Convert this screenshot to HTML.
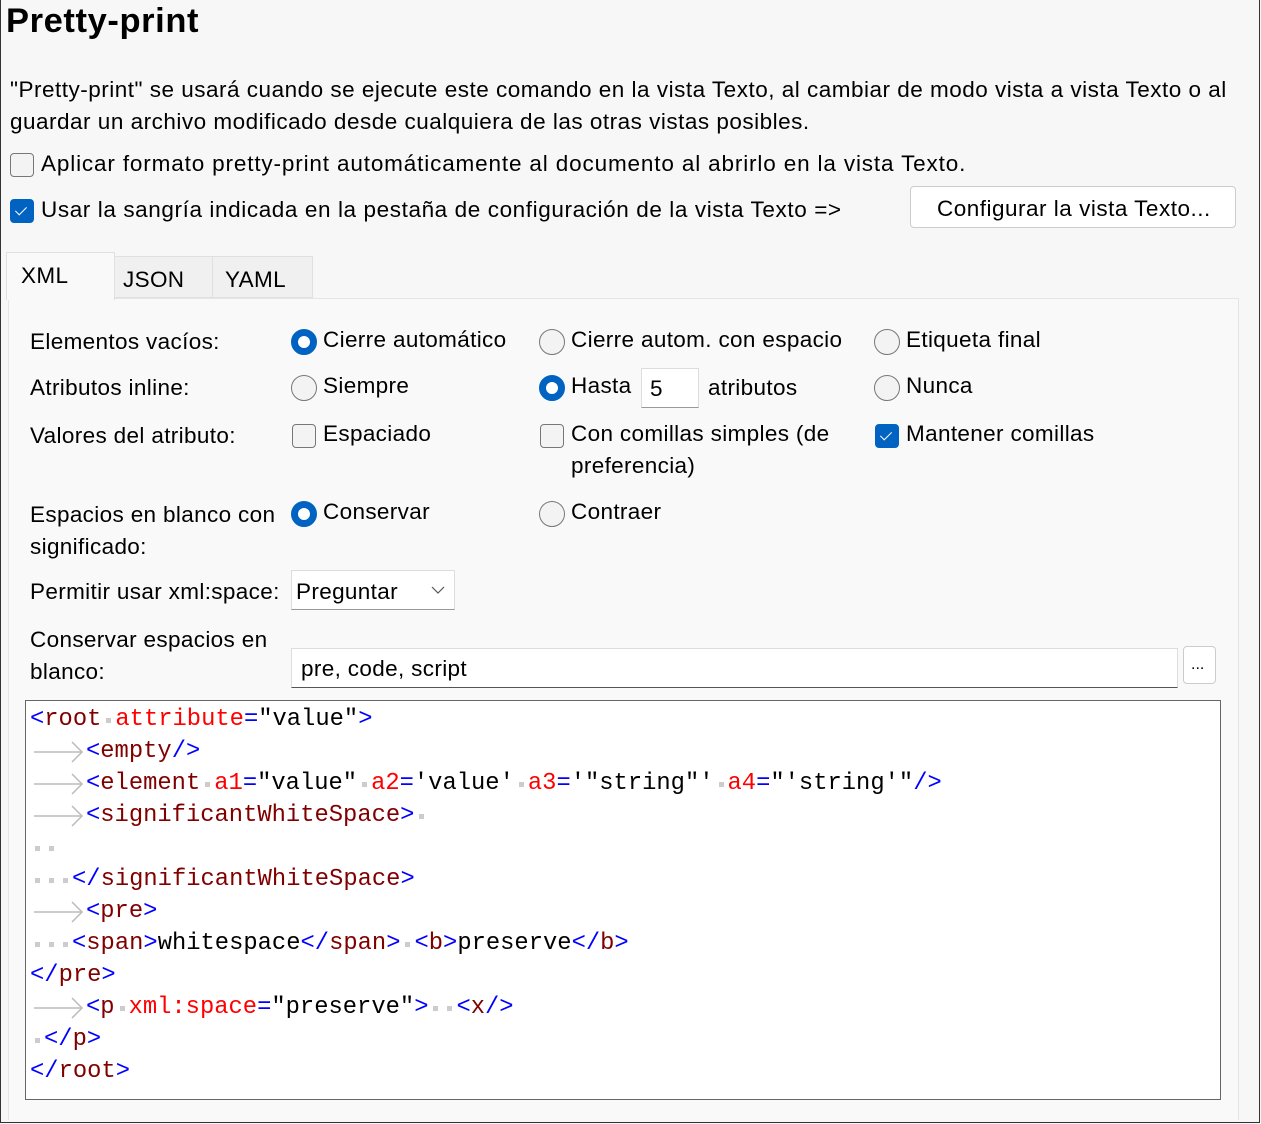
<!DOCTYPE html>
<html><head><meta charset="utf-8"><style>
*{margin:0;padding:0;box-sizing:border-box}
body{width:1261px;height:1124px;background:#f7f7f7;font-family:"Liberation Sans",sans-serif;font-size:22.5px;letter-spacing:0.85px;color:#000;position:relative;overflow:hidden}
.a{position:absolute;white-space:nowrap}
.l{letter-spacing:0.35px}
.frame{position:absolute;left:0;top:0;width:1260px;height:1123px;border:1px solid #333;border-top:none}
.cb{position:absolute;width:24px;height:24px;border:1.5px solid #777;border-radius:4px;background:#f3f3f3}
.cb.on{background:#0063c2;border-color:#0063c2}
.cb.on::after{content:"";position:absolute;left:7px;top:4px;width:5px;height:10px;border:solid #fff;border-width:0 1.5px 1.5px 0;transform:rotate(45deg)}
.rb{position:absolute;width:26px;height:26px;border:1.5px solid #777;border-radius:50%;background:#f3f3f3}
.rb.on{background:#fff;border:7px solid #0063c2}
.box{position:absolute;background:#fff;border:1px solid #ddd;border-bottom-color:#999}
.code{position:absolute;left:25px;top:700px;width:1196px;height:400px;background:#fff;border:1px solid #666;font-family:"Liberation Mono",monospace;font-size:23.8px;letter-spacing:0;padding:3px 0 0 4px}
.code div{height:32px;line-height:32px;white-space:pre}
.b{color:#0000ff}.t{color:#800000}.r{color:#ff0000}
.d{display:inline-block;width:14px;height:32px;position:relative;vertical-align:top}
.d::after{content:"";position:absolute;left:5px;top:14px;width:5px;height:5px;background:#ccc}
.tab{display:inline-block;width:56px;height:32px;vertical-align:top}
</style></head><body>
<div class="frame"></div>
<div class="a" style="left:6px;top:2px;font-size:34.5px;letter-spacing:0.6px;font-weight:bold">Pretty-print</div>
<div class="a" style="left:10px;top:74px;line-height:32px;letter-spacing:0.5px">"Pretty-print" se usará cuando se ejecute este comando en la vista Texto, al cambiar de modo vista a vista Texto o al<br>guardar un archivo modificado desde cualquiera de las otras vistas posibles.</div>
<div class="cb" style="left:10px;top:153px"></div>
<div class="a" style="left:41px;top:151px">Aplicar formato pretty-print automáticamente al documento al abrirlo en la vista Texto.</div>
<div class="cb on" style="left:10px;top:199px"></div>
<div class="a" style="left:41px;top:197px;letter-spacing:0.6px">Usar la sangría indicada en la pestaña de configuración de la vista Texto =&gt;</div>
<div class="box" style="left:910px;top:186px;width:326px;height:42px;border-radius:4px;border-color:#ccc"></div>
<div class="a" style="left:937px;top:196px;letter-spacing:0.5px">Configurar la vista Texto...</div>
<!-- tabs -->
<div style="position:absolute;left:8px;top:298px;width:1231px;height:822px;border:1px solid #e5e5e5;border-bottom:none;background:#f9f9f9"></div>
<div style="position:absolute;left:113px;top:256px;width:100px;height:42px;border:1px solid #e0e0e0;background:#f0f0f0"></div>
<div style="position:absolute;left:212px;top:256px;width:101px;height:42px;border:1px solid #e0e0e0;background:#f0f0f0"></div>
<div style="position:absolute;left:6px;top:252px;width:109px;height:48px;border:1px solid #e0e0e0;border-bottom:none;background:#f9f9f9"></div>
<div class="a l" style="left:21px;top:263px">XML</div>
<div class="a l" style="left:123px;top:267px">JSON</div>
<div class="a l" style="left:225px;top:267px">YAML</div>

<div class="a l" style="left:30px;top:329px">Elementos vacíos:</div>
<div class="rb on" style="left:291px;top:329px"></div><div class="a l" style="left:323px;top:327px">Cierre automático</div>
<div class="rb" style="left:539px;top:329px"></div><div class="a l" style="left:571px;top:327px">Cierre autom. con espacio</div>
<div class="rb" style="left:874px;top:329px"></div><div class="a l" style="left:906px;top:327px">Etiqueta final</div>

<div class="a l" style="left:30px;top:375px">Atributos inline:</div>
<div class="rb" style="left:291px;top:375px"></div><div class="a l" style="left:323px;top:373px">Siempre</div>
<div class="rb on" style="left:539px;top:375px"></div><div class="a l" style="left:571px;top:373px">Hasta</div>
<div class="box" style="left:641px;top:368px;width:58px;height:40px"></div><div class="a" style="left:650px;top:376px">5</div>
<div class="a l" style="left:708px;top:375px">atributos</div>
<div class="rb" style="left:874px;top:375px"></div><div class="a l" style="left:906px;top:373px">Nunca</div>

<div class="a l" style="left:30px;top:423px">Valores del atributo:</div>
<div class="cb" style="left:292px;top:424px"></div><div class="a l" style="left:323px;top:421px">Espaciado</div>
<div class="cb" style="left:540px;top:424px"></div><div class="a l" style="left:571px;line-height:32px;top:418px">Con comillas simples (de<br>preferencia)</div>
<div class="cb on" style="left:875px;top:424px"></div><div class="a l" style="left:906px;top:421px">Mantener comillas</div>

<div class="a l" style="left:30px;top:499px;line-height:32px">Espacios en blanco con<br>significado:</div>
<div class="rb on" style="left:291px;top:501px"></div><div class="a l" style="left:323px;top:499px">Conservar</div>
<div class="rb" style="left:539px;top:501px"></div><div class="a l" style="left:571px;top:499px">Contraer</div>

<div class="a l" style="left:30px;top:579px">Permitir usar xml:space:</div>
<div class="box" style="left:291px;top:570px;width:164px;height:40px"></div>
<div class="a l" style="left:296px;top:579px">Preguntar</div>
<svg style="position:absolute;left:431px;top:586px" width="14" height="9"><path d="M1 1 L7 7 L13 1" fill="none" stroke="#555" stroke-width="1.2"/></svg>

<div class="a l" style="left:30px;top:624px;line-height:32px">Conservar espacios en<br>blanco:</div>
<div class="box" style="left:291px;top:648px;width:887px;height:40px;border-bottom-color:#555"></div>
<div class="a l" style="left:301px;top:656px">pre, code, script</div>
<div class="box" style="left:1183px;top:646px;width:33px;height:38px;border-radius:4px;border-color:#ccc"></div>
<div class="a" style="left:1191px;top:656px;font-size:16px;letter-spacing:0">...</div>

<div class="code">
<div><span class="b">&lt;</span><span class="t">root</span><span class="d"></span><span class="r">attribute</span><span class="b">=</span>"value"<span class="b">&gt;</span></div>
<div><svg class="tab" viewBox="0 0 56 32"><path d="M4 16 H52 M42 6 L52 16 L42 26" fill="none" stroke="#bbb" stroke-width="1.5"/></svg><span class="b">&lt;</span><span class="t">empty</span><span class="b">/&gt;</span></div>
<div><svg class="tab" viewBox="0 0 56 32"><path d="M4 16 H52 M42 6 L52 16 L42 26" fill="none" stroke="#bbb" stroke-width="1.5"/></svg><span class="b">&lt;</span><span class="t">element</span><span class="d"></span><span class="r">a1</span><span class="b">=</span>"value"<span class="d"></span><span class="r">a2</span><span class="b">=</span>'value'<span class="d"></span><span class="r">a3</span><span class="b">=</span>'"string"'<span class="d"></span><span class="r">a4</span><span class="b">=</span>"'string'"<span class="b">/&gt;</span></div>
<div><svg class="tab" viewBox="0 0 56 32"><path d="M4 16 H52 M42 6 L52 16 L42 26" fill="none" stroke="#bbb" stroke-width="1.5"/></svg><span class="b">&lt;</span><span class="t">significantWhiteSpace</span><span class="b">&gt;</span><span class="d"></span></div>
<div><span class="d"></span><span class="d"></span></div>
<div><span class="d"></span><span class="d"></span><span class="d"></span><span class="b">&lt;/</span><span class="t">significantWhiteSpace</span><span class="b">&gt;</span></div>
<div><svg class="tab" viewBox="0 0 56 32"><path d="M4 16 H52 M42 6 L52 16 L42 26" fill="none" stroke="#bbb" stroke-width="1.5"/></svg><span class="b">&lt;</span><span class="t">pre</span><span class="b">&gt;</span></div>
<div><span class="d"></span><span class="d"></span><span class="d"></span><span class="b">&lt;</span><span class="t">span</span><span class="b">&gt;</span>whitespace<span class="b">&lt;/</span><span class="t">span</span><span class="b">&gt;</span><span class="d"></span><span class="b">&lt;</span><span class="t">b</span><span class="b">&gt;</span>preserve<span class="b">&lt;/</span><span class="t">b</span><span class="b">&gt;</span></div>
<div><span class="b">&lt;/</span><span class="t">pre</span><span class="b">&gt;</span></div>
<div><svg class="tab" viewBox="0 0 56 32"><path d="M4 16 H52 M42 6 L52 16 L42 26" fill="none" stroke="#bbb" stroke-width="1.5"/></svg><span class="b">&lt;</span><span class="t">p</span><span class="d"></span><span class="r">xml:space</span><span class="b">=</span>"preserve"<span class="b">&gt;</span><span class="d"></span><span class="d"></span><span class="b">&lt;</span><span class="t">x</span><span class="b">/&gt;</span></div>
<div><span class="d"></span><span class="b">&lt;/</span><span class="t">p</span><span class="b">&gt;</span></div>
<div><span class="b">&lt;/</span><span class="t">root</span><span class="b">&gt;</span></div>
</div>
</body></html>
